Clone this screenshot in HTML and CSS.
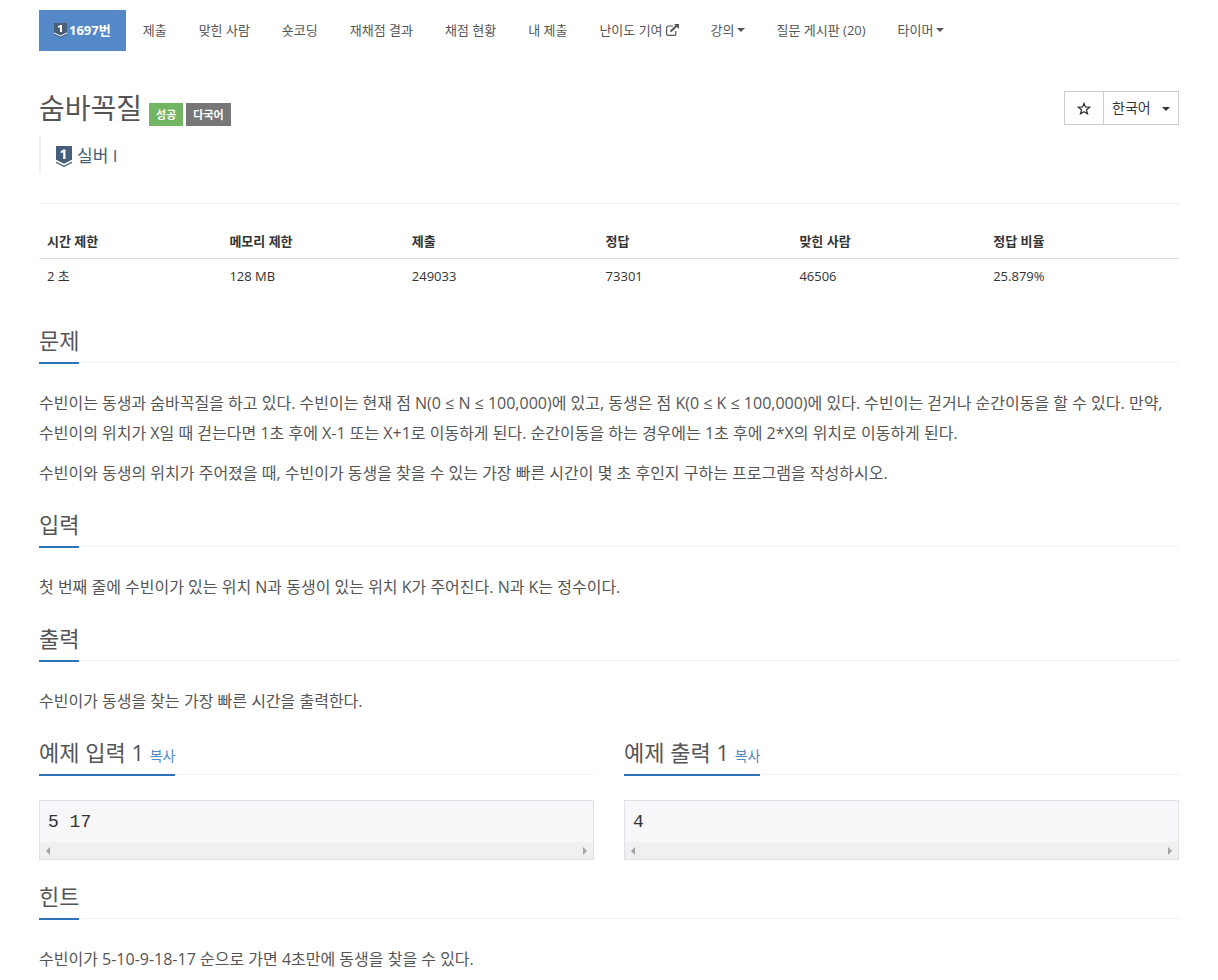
FILE: index.html
```
<!DOCTYPE html>
<html lang="ko">
  <head>
    <meta charset="utf-8">
    <meta name="viewport" content="width=device-width, initial-scale=1">
    <title>1697번: 숨바꼭질</title>
    <link rel="stylesheet" href="styles.css">
  </head>
  <body>
    <div class="container">
      <nav>
        <ul class="problem-menu">
          <li class="active">
            <a href="#">
              <svg class="tier-small" viewBox="0 0 13 16" aria-hidden="true">
                <path fill="#4a6078" d="M0 1h13v9.500L6.500 14 0 10.500z"/>
                <path fill="none" stroke="#fff" stroke-width="1" d="M0 11l6.500 3 6.500-3"/>
                <path fill="none" stroke="#4a6078" stroke-width="1" d="M0 12.300l6.500 3 6.500-3"/>
                <path fill="#fff" d="M6 3h2v7H6V5L4 6V4.300z"/>
              </svg>
              1697번</a>
          </li>
          <li><a href="#">제출</a></li>
          <li><a href="#">맞힌 사람</a></li>
          <li><a href="#">숏코딩</a></li>
          <li><a href="#">재채점 결과</a></li>
          <li><a href="#">채점 현황</a></li>
          <li><a href="#">내 제출</a></li>
          <li>
            <a href="#">난이도 기여
              <svg class="external" viewBox="0 0 14 12" aria-hidden="true">
                <path fill="none" stroke="#555" stroke-width="1.2" d="M8 2H3.500Q1.600 2 1.600 4v5.500q0 1.900 1.900 1.900H9q1.900 0 1.900-1.900V7"/>
                <path fill="none" stroke="#555" stroke-width="2" d="M5.500 7.500L12 1.500"/>
                <path fill="#555" d="M9 0h5v5z"/>
              </svg></a>
          </li>
          <li><a href="#">강의<span class="caret"></span></a></li>
          <li><a href="#">질문 게시판 (20)</a></li>
          <li><a href="#">타이머<span class="caret"></span></a></li>
        </ul>
      </nav>

      <header class="page-header">
        <div>
          <div class="title">
            <h1>숨바꼭질</h1>
            <span class="label label-success">성공</span>
            <span class="label">다국어</span>
          </div>
          <blockquote class="tier">
            <svg class="tier-icon" viewBox="0 0 16 21" aria-hidden="true">
              <path fill="#435f7a" d="M0 0h16v14l-8 4-8-4z"/>
              <path fill="none" stroke="#fff" stroke-width="1.2" d="M0 14.500l8 4 8-4"/>
              <path fill="none" stroke="#435f7a" stroke-width="1.3" d="M0 16.300l8 4 8-4"/>
              <path fill="#fff" d="M7.300 3.500h2.200V13H7.200V6.300L4.800 7.300V5.200z"/>
            </svg>
            실버 I
          </blockquote>
        </div>
        <div class="btn-group">
          <button type="button" class="btn" aria-label="즐겨찾기">
            <svg class="star" viewBox="0 0 14 13" aria-hidden="true">
              <path fill="none" stroke="#333" stroke-width="1.3" d="M7 1.500l1.500 3.400 4.200.3-3.200 2.600 1 4L7 9.700l-3.500 2.100 1-4L1.300 5.200l4.200-.3z"/>
            </svg>
          </button>
          <div class="language">
            <select class="btn" aria-label="언어">
              <option>한국어</option>
            </select>
            <span class="caret"></span>
          </div>
        </div>
      </header>

      <table class="problem-info">
        <thead>
          <tr>
            <th class="narrow">시간 제한</th>
            <th class="narrow">메모리 제한</th>
            <th>제출</th>
            <th>정답</th>
            <th>맞힌 사람</th>
            <th>정답 비율</th>
          </tr>
        </thead>
        <tbody>
          <tr>
            <td>2 초</td>
            <td>128 MB</td>
            <td>249033</td>
            <td>73301</td>
            <td>46506</td>
            <td>25.879%</td>
          </tr>
        </tbody>
      </table>

      <section>
        <div class="headline"><h2>문제</h2></div>
        <p>수빈이는 동생과 숨바꼭질을 하고 있다. 수빈이는 현재 점 N(0 ≤ N ≤ 100,000)에 있고, 동생은 점 K(0 ≤ K ≤ 100,000)에 있다. 수빈이는 걷거나 순간이동을 할 수 있다. 만약, 수빈이의 위치가 X일 때 걷는다면 1초 후에 X-1 또는 X+1로 이동하게 된다. 순간이동을 하는 경우에는 1초 후에 2*X의 위치로 이동하게 된다.</p>
        <p>수빈이와 동생의 위치가 주어졌을 때, 수빈이가 동생을 찾을 수 있는 가장 빠른 시간이 몇 초 후인지 구하는 프로그램을 작성하시오.</p>
      </section>

      <section>
        <div class="headline"><h2>입력</h2></div>
        <p>첫 번째 줄에 수빈이가 있는 위치 N과 동생이 있는 위치 K가 주어진다. N과 K는 정수이다.</p>
      </section>

      <section>
        <div class="headline"><h2>출력</h2></div>
        <p>수빈이가 동생을 찾는 가장 빠른 시간을 출력한다.</p>
      </section>

      <div class="samples">
        <section>
          <div class="headline"><h2>예제 입력 1 <button type="button" class="copy">복사</button></h2></div>
          <div class="sample">
            <pre>5 17</pre>
            <div class="scrollbar"><span class="arrow-left"></span><span class="arrow-right"></span></div>
          </div>
        </section>
        <section>
          <div class="headline"><h2>예제 출력 1 <button type="button" class="copy">복사</button></h2></div>
          <div class="sample">
            <pre>4</pre>
            <div class="scrollbar"><span class="arrow-left"></span><span class="arrow-right"></span></div>
          </div>
        </section>
      </div>

      <section>
        <div class="headline"><h2>힌트</h2></div>
        <p>수빈이가 5-10-9-18-17 순으로 가면 4초만에 동생을 찾을 수 있다.</p>
      </section>
    </div>
  </body>
</html>
```

FILE: styles.css
```
* {
  box-sizing: border-box;
}

body {
  margin: 0;
  background: #fff;
  color: #333;
  font-family: "Open Sans", "Noto Sans CJK KR", sans-serif;
  font-size: 13px;
  line-height: 20px;
}

.container {
  max-width: 1170px;
  margin: 0 auto;
  padding: 10px 15px 0;
}

/* menu */
.problem-menu {
  display: flex;
  flex-wrap: wrap;
  gap: 2px;
  margin: 0;
  padding: 0;
  list-style: none;
}

.problem-menu a {
  display: flex;
  align-items: center;
  gap: 2px;
  height: 41px;
  padding: 0 15px 2px;
  color: #555;
  text-decoration: none;
}

.problem-menu .active a {
  background: #5488c7;
  color: #fff;
  font-weight: bold;
}

.tier-small {
  width: 13px;
  height: 16px;
}

.external {
  width: 14px;
  height: 12px;
}

.caret {
  border-top: 4px solid;
  border-left: 4px solid transparent;
  border-right: 4px solid transparent;
}

/* title */
.page-header {
  display: flex;
  justify-content: space-between;
  align-items: flex-start;
  padding: 40px 0 29px;
  border-bottom: 1px solid #eee;
}

.title {
  display: flex;
  align-items: flex-end;
  gap: 3px;
  height: 35px;
}

h1 {
  margin: 0 4px 0 0;
  color: #555;
  font-size: 28px;
  font-weight: normal;
  line-height: 35px;
}

.label {
  padding: 0 7px;
  background: #777;
  color: #fff;
  font-size: 11px;
  font-weight: 600;
  line-height: 23px;
}

.label-success {
  background: #72b562;
}

.tier {
  display: flex;
  align-items: center;
  gap: 5px;
  height: 38px;
  margin: 10px 0 0;
  padding: 2px 0 0 15px;
  border-left: 2px solid #eee;
  color: #435f7a;
  font-size: 17px;
}

.tier-icon {
  width: 16px;
  height: 21px;
}

.btn-group {
  display: flex;
  border: 1px solid #ccc;
}

.btn {
  height: 32px;
  padding: 0 12px;
  border: 0;
  background: #fff;
  color: #333;
  font: inherit;
  font-size: 14px;
}

.star {
  display: block;
  width: 14px;
  height: 13px;
}

.language {
  position: relative;
  border-left: 1px solid #ccc;
}

.language .btn {
  appearance: none;
  padding: 0 27px 0 8px;
}

.language .caret {
  position: absolute;
  top: 15px;
  right: 8px;
  pointer-events: none;
}

/* limits and statistics */
.problem-info {
  width: 100%;
  margin: 20px 0 31px;
  border-collapse: collapse;
  table-layout: fixed;
}

.problem-info th,
.problem-info td {
  padding: 7px 8px;
  text-align: left;
}

.problem-info th {
  border-bottom: 1px solid #ddd;
}

.problem-info .narrow {
  width: 16%;
}

/* sections */
.headline {
  display: flex;
  margin: 20px 0 25px;
  border-bottom: 1px dotted #e4e9f0;
}

h2 {
  margin: 0 0 -2px;
  padding-bottom: 5px;
  border-bottom: 2px solid #3072b9;
  color: #555;
  font-size: 22px;
  font-weight: normal;
  line-height: 33px;
}

p {
  margin: 0;
  color: #555;
  font-size: 16px;
  line-height: 30px;
}

p + p {
  margin-top: 10px;
}

.copy {
  padding: 0;
  border: 0;
  background: none;
  color: #5488c7;
  font: inherit;
  font-size: 14px;
  line-height: 20px;
  cursor: pointer;
}

.samples {
  display: grid;
  grid-template-columns: 1fr 1fr;
  gap: 30px;
}

.sample {
  border: 1px solid #e0e0e8;
  background: #f7f7f9;
}

pre {
  margin: 0;
  padding: 9px 8px 7px;
  font-family: "Liberation Mono", monospace;
  font-size: 18px;
  line-height: 25px;
}

.scrollbar {
  display: flex;
  justify-content: space-between;
  align-items: center;
  height: 17px;
  padding: 0 6px;
  background: #f0f0f0;
}

.arrow-left,
.arrow-right {
  border: 4px solid transparent;
}

.arrow-left {
  border-left: 0;
  border-right-color: #a3a3a3;
}

.arrow-right {
  border-right: 0;
  border-left-color: #a3a3a3;
}
```
